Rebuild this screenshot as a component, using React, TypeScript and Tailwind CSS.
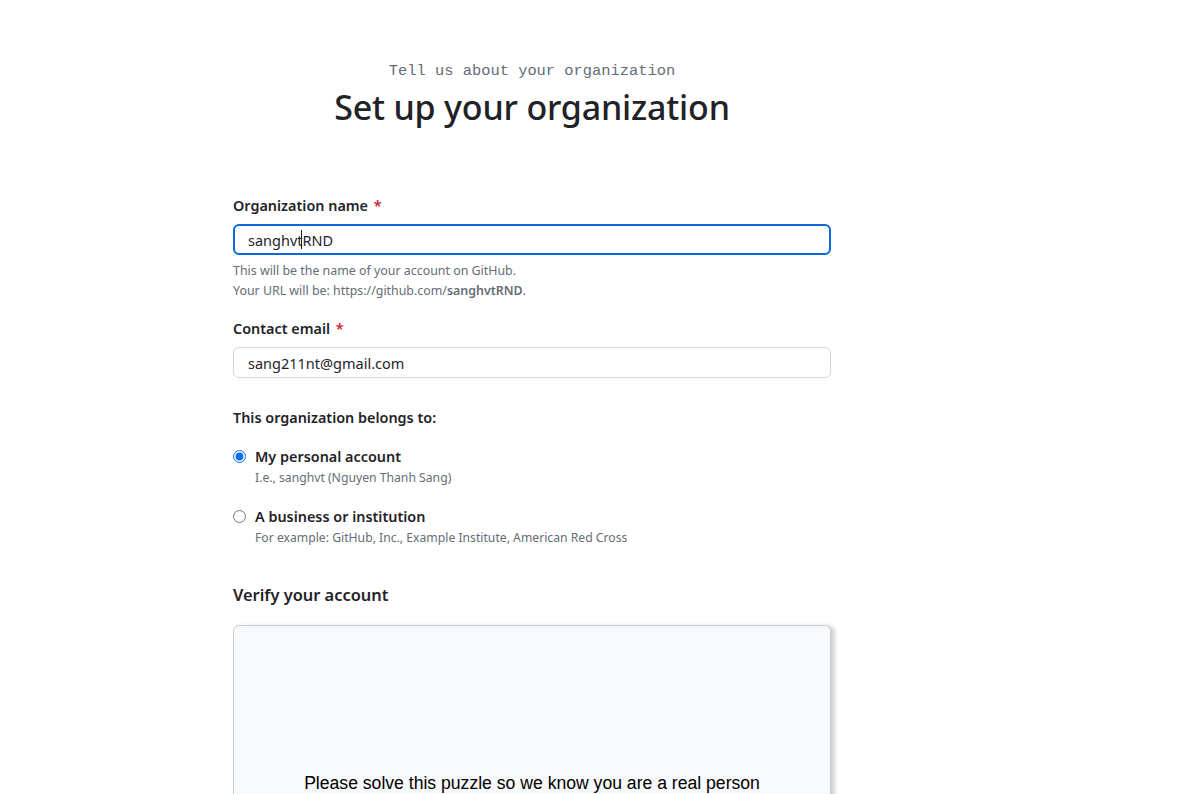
import { useState } from "react";

const sans = "font-['Noto_Sans',sans-serif]";

export default function App() {
  const [owner, setOwner] = useState("personal");

  return (
    <div className={`min-h-screen bg-white text-[#1f2328] ${sans}`}>
      <div className="ml-[233px] w-[598px] pt-[60px]">
        {/* Header */}
        <div className="flex flex-col items-center">
          <p className="font-['Liberation_Mono',monospace] text-[15.4px] leading-[22px] text-[#656d76]">
            Tell us about your organization
          </p>
          <h1 className="mt-[2px] text-[34px] font-medium leading-[46px] tracking-[-0.2px]">
            Set up your organization
          </h1>
        </div>

        {/* Form */}
        <form className="mt-[65px] flex flex-col">
          <label className="text-[14.4px] font-semibold leading-[22px]">
            Organization name <span className="ml-[2px] text-[#cf222e]">*</span>
          </label>
          <div className="relative mt-[7px]">
            <input
              defaultValue="sanghvtRND"
              className="h-[31px] w-full rounded-[6px] border-2 border-[#0969da] px-[13px] text-[14.5px] outline-none"
            />
            {/* text caret */}
            <span className="pointer-events-none absolute left-[68px] top-[6px] h-[19px] w-px bg-[#1f2328]" />
          </div>
          <p className="mt-[6px] text-[12.4px] leading-[20px] text-[#656d76]">
            This will be the name of your account on GitHub.
            <br />
            Your URL will be: https://github.com/<b className="font-semibold">sanghvtRND</b>.
          </p>

          <label className="mt-[17px] text-[14.4px] font-semibold leading-[22px]">
            Contact email <span className="ml-[2px] text-[#cf222e]">*</span>
          </label>
          <input
            defaultValue="sang211nt@gmail.com"
            className="mt-[7px] h-[31px] w-full rounded-[6px] border border-[#d0d7de] px-[14px] text-[14.5px] outline-none"
          />

          <p className="mt-[29px] text-[14.4px] font-semibold leading-[22px]">
            This organization belongs to:
          </p>

          <div className="mt-[17px] flex flex-col gap-[18px]">
            {[
              { id: "personal", title: "My personal account", note: "I.e., sanghvt (Nguyen Thanh Sang)" },
              {
                id: "business",
                title: "A business or institution",
                note: "For example: GitHub, Inc., Example Institute, American Red Cross",
              },
            ].map((o) => (
              <label key={o.id} className="flex items-start gap-[9px]">
                <input
                  type="radio"
                  name="owner"
                  checked={owner === o.id}
                  onChange={() => setOwner(o.id)}
                  className="mt-[4px] h-[13px] w-[13px] accent-[#0a6ff7]"
                />
                <span className="flex flex-col">
                  <span className="text-[14.4px] font-semibold leading-[22px]">{o.title}</span>
                  <span className="text-[12.2px] leading-[20px] text-[#656d76]">{o.note}</span>
                </span>
              </label>
            ))}
          </div>

          <h2 className="mt-[35px] text-[16.4px] font-semibold leading-[24px]">Verify your account</h2>

          <div className="mt-[18px] h-[220px] rounded-[6px] border border-[#c8ccd1] bg-[#f8f9fa] shadow-[4px_1px_4px_rgba(0,0,0,0.18)]">
            <p className="pt-[144px] text-center font-['Liberation_Sans',Arial,sans-serif] text-[17.6px] text-black">
              Please solve this puzzle so we know you are a real person
            </p>
          </div>
        </form>
      </div>
    </div>
  );
}
